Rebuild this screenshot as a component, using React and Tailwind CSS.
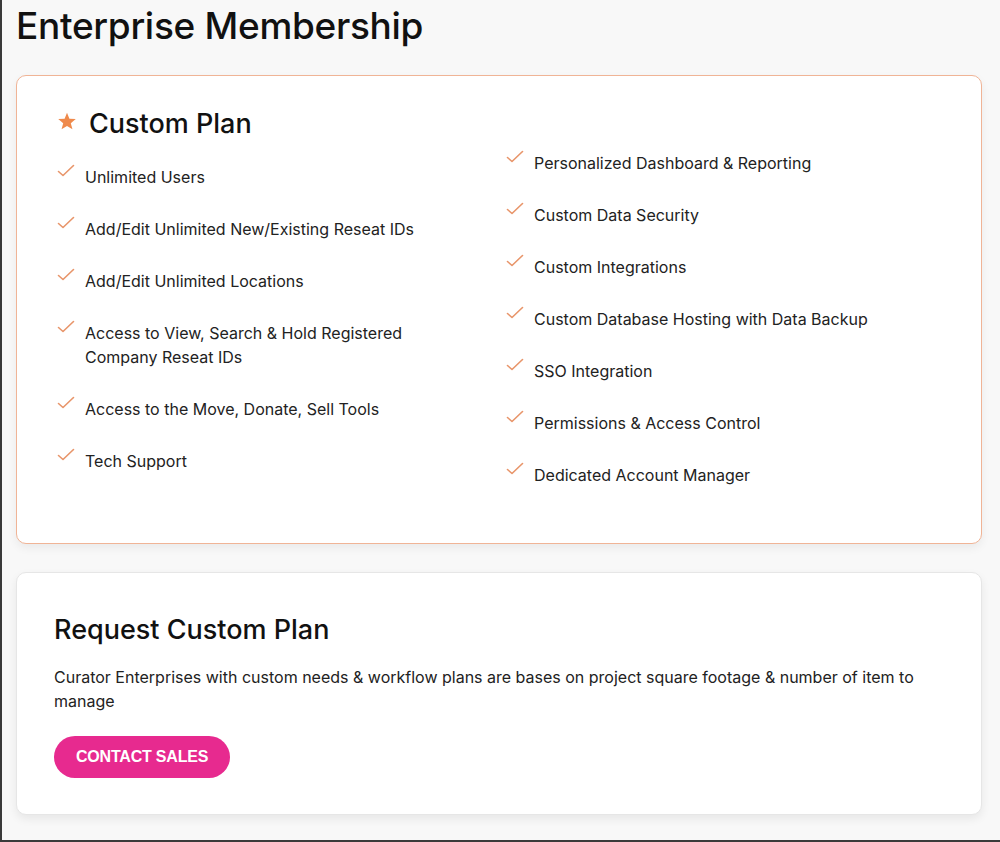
import React from "react";

const left = [
  ["Unlimited Users"],
  ["Add/Edit Unlimited New/Existing Reseat IDs"],
  ["Add/Edit Unlimited Locations"],
  ["Access to View, Search & Hold Registered", "Company Reseat IDs"],
  ["Access to the Move, Donate, Sell Tools"],
  ["Tech Support"],
];
const right = [
  "Personalized Dashboard & Reporting",
  "Custom Data Security",
  "Custom Integrations",
  "Custom Database Hosting with Data Backup",
  "SSO Integration",
  "Permissions & Access Control",
  "Dedicated Account Manager",
];

function Check() {
  return (
    <svg width="18" height="14" viewBox="0 0 18 14" className="shrink-0 mt-[-1px]">
      <path d="M1.5 7.5 L6 11.5 L16.5 1.5" fill="none" stroke="#e8956a" strokeWidth="1.6" strokeLinecap="round" strokeLinejoin="round" />
    </svg>
  );
}

function Item({ lines }) {
  return (
    <div className="flex items-start gap-[10px]">
      <Check />
      <div className="text-[16px] leading-[24px] text-[#222]">
        {lines.map((l, i) => (
          <div key={i}>{l}</div>
        ))}
      </div>
    </div>
  );
}

export default function App() {
  return (
    <div
      className="w-[1000px] h-[842px] bg-[#f8f8f8] border-l-2 border-b-2 border-[#3a3a3a] overflow-hidden"
      style={{ fontFamily: "Inter, 'Noto Sans', sans-serif" }}
    >
      <h1 className="pl-[14px] pt-[4px] text-[37px] leading-[44px] font-medium text-[#111] tracking-[-0.3px]">
        Enterprise Membership
      </h1>
      <div className="ml-[14px] mr-[18px] mt-[27px] h-[469px] bg-white border border-[#f0b496] rounded-[10px] shadow-[0_4px_10px_rgba(0,0,0,0.06)] pl-[40px] pt-[31px] grid grid-cols-[449px_1fr]">
        <div>
          <div className="flex items-center gap-[12px]">
            <svg width="20" height="19" viewBox="0 0 24 23" className="mt-[-6px]">
              <path d="M12 1 L14.9 8.2 L22.6 8.6 L16.6 13.5 L18.6 21 L12 16.8 L5.4 21 L7.4 13.5 L1.4 8.6 L9.1 8.2 Z" fill="#ef8a4c" />
            </svg>
            <div className="text-[27px] leading-[34px] font-medium text-[#111]">Custom Plan</div>
          </div>
          <div className="mt-[24px] flex flex-col gap-[28px]">
            {left.map((l, i) => (
              <Item key={i} lines={l} />
            ))}
          </div>
        </div>
        <div className="mt-[44px] flex flex-col gap-[28px]">
          {right.map((r, i) => (
            <Item key={i} lines={[r]} />
          ))}
        </div>
      </div>
      <div className="ml-[14px] mr-[18px] mt-[28px] h-[243px] bg-white border border-[#e6e6e6] rounded-[10px] shadow-[0_4px_10px_rgba(0,0,0,0.07)] pl-[37px] pr-[36px] pt-[40px]">
        <div className="text-[27px] leading-[34px] font-medium text-[#111]">Request Custom Plan</div>
        <p className="mt-[18px] text-[16px] leading-[24px] text-[#222]">
          Curator Enterprises with custom needs &amp; workflow plans are bases on project square footage &amp; number of item to manage
        </p>
        <button
          className="mt-[23px] h-[42px] px-[22px] rounded-full bg-[#e72a8f] text-white text-[16px] font-bold tracking-[-0.2px]"
          style={{ fontFamily: "'Liberation Sans', Arial, sans-serif" }}
        >
          CONTACT SALES
        </button>
      </div>
    </div>
  );
}
